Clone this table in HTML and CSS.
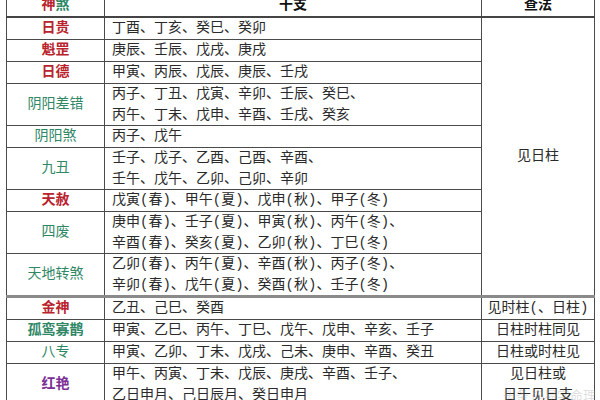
FILE: index.html
```html
<!DOCTYPE html>
<html lang="zh">
<head>
<meta charset="utf-8">
<link rel="stylesheet" href="styles.css">
</head>
<body>
<div class="frame">
<table class="sha">
  <colgroup><col class="c1"><col class="c2"><col class="c3"></colgroup>
  <tr class="head">
    <th><span class="r">神</span><span class="g">煞</span></th>
    <th>干支</th>
    <th>查法</th>
  </tr>
  <tr><td class="name r b">日贵</td><td class="gz">丁酉、丁亥、癸巳、癸卯</td><td class="way" rowspan="9">见日柱</td></tr>
  <tr><td class="name r b">魁罡</td><td class="gz">庚辰、壬辰、戊戌、庚戌</td></tr>
  <tr><td class="name r b">日德</td><td class="gz">甲寅、丙辰、戊辰、庚辰、壬戌</td></tr>
  <tr><td class="name g">阴阳差错</td><td class="gz">丙子、丁丑、戊寅、辛卯、壬辰、癸巳、<br>丙午、丁未、戊申、辛酉、壬戌、癸亥</td></tr>
  <tr><td class="name g">阴阳煞</td><td class="gz">丙子、戊午</td></tr>
  <tr><td class="name g">九丑</td><td class="gz">壬子、戊子、乙酉、己酉、辛酉、<br>壬午、戊午、乙卯、己卯、辛卯</td></tr>
  <tr><td class="name r b">天赦</td><td class="gz">戊寅(春)、甲午(夏)、戊申(秋)、甲子(冬)</td></tr>
  <tr><td class="name g">四废</td><td class="gz">庚申(春)、壬子(夏)、甲寅(秋)、丙午(冬)、<br>辛酉(春)、癸亥(夏)、乙卯(秋)、丁巳(冬)</td></tr>
  <tr><td class="name g">天地转煞</td><td class="gz">乙卯(春)、丙午(夏)、辛酉(秋)、丙子(冬)、<br>辛卯(春)、戊午(夏)、癸酉(秋)、壬子(冬)</td></tr>
  <tr class="sep"><td class="name r b">金神</td><td class="gz">乙丑、己巳、癸酉</td><td class="way">见时柱(、日柱)</td></tr>
  <tr><td class="name g b">孤鸾寡鹊</td><td class="gz">甲寅、乙巳、丙午、丁巳、戊午、戊申、辛亥、壬子</td><td class="way">日柱时柱同见</td></tr>
  <tr><td class="name g">八专</td><td class="gz">甲寅、乙卯、丁未、戊戌、己未、庚申、辛酉、癸丑</td><td class="way">日柱或时柱见</td></tr>
  <tr><td class="name p b">红艳</td><td class="gz">甲午、丙寅、丁未、戊辰、庚戌、辛酉、壬子、<br>乙日申月、己日辰月、癸日申月</td><td class="way">见日柱或<br>日干见日支</td></tr>
</table>
<div class="mark">头条 @易学命理</div>
</div>
</body>
</html>
```

FILE: styles.css
```css
html, body {
  margin: 0;
  padding: 0;
  background: #fff;
}
.frame {
  position: relative;
  width: 600px;
  height: 400px;
  overflow: hidden;
}
.sha {
  margin: -7px 0 0 6px;
  width: 588px;
  border-collapse: collapse;
  table-layout: fixed;
  font-family: "Liberation Mono", "Noto Sans CJK SC", sans-serif;
  font-size: 14px;
  color: #2a2a2a;
}
.c1 { width: 98px; }
.c2 { width: 377px; }
.c3 { width: 113px; }
.sha th, .sha td {
  border: 1px solid #4a4a4a;
  padding: 0;
  line-height: 20.5px;
  height: 21px;
  box-sizing: content-box;
}
.sha .head th {
  height: 22px;
  font-weight: 700;
  color: #111;
  border-bottom: 2px solid #444;
}
.name {
  text-align: center;
}
.gz {
  padding-left: 7px !important;
  text-align: left;
  white-space: nowrap;
}
.way {
  text-align: center;
  vertical-align: middle;
  white-space: nowrap;
}
.sep td {
  border-top: 3px solid #8a8a8a;
}
.r { color: #b8232d; }
.g { color: #2f8766; }
.p { color: #7b2e96; }
.b { font-weight: 700; }
.mark {
  position: absolute;
  right: 4px;
  bottom: -4px;
  font-family: "Noto Sans CJK SC", sans-serif;
  font-size: 13px;
  color: rgba(160, 160, 160, 0.35);
}
```
